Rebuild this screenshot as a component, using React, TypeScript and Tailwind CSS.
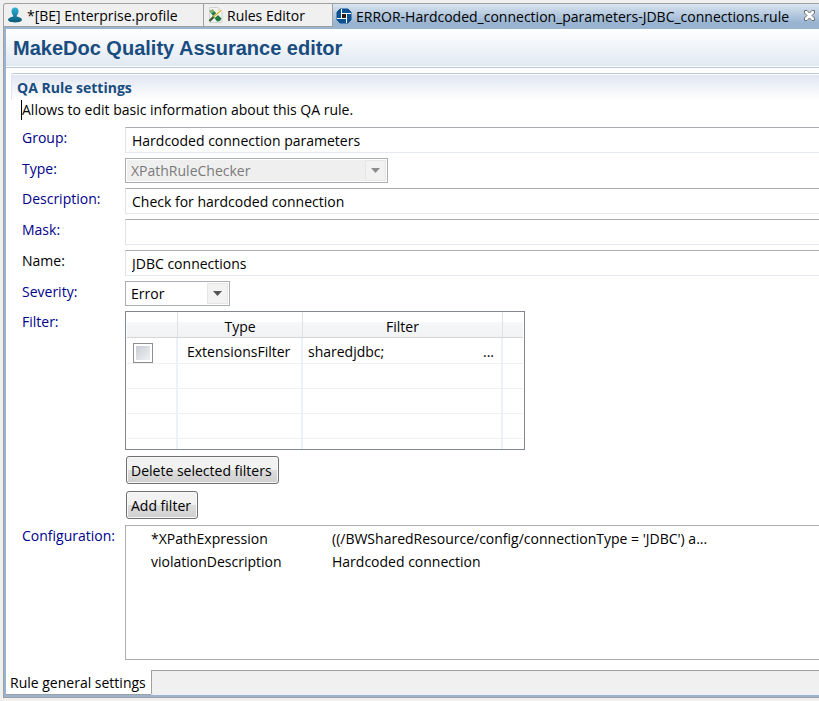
import React from 'react';

function UserIcon() {
  return (
    <svg className="shrink-0" width="16" height="16" viewBox="0 0 16 16" aria-hidden="true">
      <defs>
        <linearGradient id="user-fill" x1="0" y1="0" x2="0" y2="1">
          <stop offset="0" stopColor="#2fb3da" />
          <stop offset="1" stopColor="#0b5875" />
        </linearGradient>
      </defs>
      <path
        d="M8 .6c2.500 0 3.700 1.800 3.500 4-.1 1.700-.9 3-1.700 4v1c2.700.7 4.900 1.300 5.200 3.200.1 1.600-3 2.600-7 2.600s-7.100-1-7-2.600c.3-1.900 2.500-2.500 5.200-3.200v-1c-.8-1-1.600-2.300-1.700-4C4.300 2.400 5.500.6 8 .6z"
        fill="url(#user-fill)"
      />
    </svg>
  );
}

function RulesIcon() {
  return (
    <svg className="shrink-0" width="16" height="16" viewBox="0 0 16 16" aria-hidden="true">
      <path d="M1.500 .5h8.500l4 4v11H1.500z" fill="#f1f1ef" stroke="#d2d2cf" />
      <path d="M10 .5v4h4z" fill="#dcdcda" />
      <path d="M1.500 4l3-1.500 9 9-1.500 2.500-3 .5z" fill="#1e7a42" />
      <path d="M1.500 4l3-1.500 2 2-3 2z" fill="#7fae70" />
      <path d="M6 10L13.500 3" stroke="#fff" strokeWidth="2.500" />
      <path d="M1.500 14L6 9.500" stroke="#37602f" strokeWidth="2.400" />
      <path d="M5.500 10L13.500 3" stroke="#d9b52e" strokeWidth="1.300" />
    </svg>
  );
}

function RuleFileIcon() {
  return (
    <svg className="shrink-0" width="16" height="16" viewBox="0 0 16 16" aria-hidden="true">
      <path d="M4 1h8l3 3v8l-3 3H4l-3-3V4z" fill="#0d5190" stroke="#0d5190" strokeLinejoin="round" />
      <path d="M5.500 1v9.500M15 5.500H5.500M10.500 15V5.500M1 10.500h9.500" fill="none" stroke="#fff" />
      <rect x="6" y="6" width="4" height="4" fill="#2a1a12" />
    </svg>
  );
}

function CloseIcon() {
  return (
    <svg width="11" height="11" viewBox="0 0 11 11" aria-hidden="true">
      <path
        d="M.5 .5h2.500l2.500 2.500L8 .5h2.500V3L8 5.500l2.500 2.500v2.500H8L5.500 8 3 10.500H.5V8L3 5.500.5 3z"
        fill="#fff"
        stroke="#6d6d6d"
      />
    </svg>
  );
}

function Combo(props: { id: string; value: string; disabled?: boolean; width: string }) {
  return (
    <div className={`relative h-[25px] ${props.width}`}>
      <select
        id={props.id}
        disabled={props.disabled}
        defaultValue={props.value}
        className="block h-full w-full appearance-none border border-[#abadb3] bg-white pl-[5px] text-black opacity-100 shadow-[inset_0_0_0_1px_#fff] disabled:bg-[#efefef] disabled:text-[#7a7a7a]"
      >
        <option>{props.value}</option>
      </select>
      <span className="pointer-events-none absolute inset-y-[2px] right-[2px] flex w-[21px] items-center justify-center border border-[#e6e6e6] bg-[#f2f2f2]">
        <svg width="9" height="5" viewBox="0 0 9 5" aria-hidden="true">
          <path d="M0 0h9L4.500 5z" fill={props.disabled ? '#8c8c8c' : '#555'} />
        </svg>
      </span>
    </div>
  );
}

function Label(props: { htmlFor: string; children: string; plain?: boolean }) {
  return (
    <label
      htmlFor={props.htmlFor}
      className={`leading-[22px] ${props.plain ? 'text-black' : 'text-[#00008b]'}`}
    >
      {props.children}
    </label>
  );
}

function TextField(props: { id: string; value?: string }) {
  return (
    <input
      id={props.id}
      type="text"
      defaultValue={props.value}
      className="h-[26px] w-full border border-r-0 border-t-[#abadb3] border-b-[#e3e9ef] border-l-[#e2e3ea] bg-white px-1.5 outline-none"
    />
  );
}

const pushButton =
  'h-7 rounded-[3px] border border-[#707070] bg-linear-to-b from-[#f2f2f2] from-50% via-[#dddddd] via-50% to-[#cfcfcf] pt-0.5 pr-1.5 pl-1 shadow-[inset_0_0_0_1px_#f8f8f8]';
const headCell = 'border-b border-b-[#d5d5d5] p-0 font-normal';
const divider = 'border-r-2 border-r-[#ebf0fb]';
const headDivider = 'border-r border-r-[#dfe2e6]';

export default function App() {
  return (
    <div className="flex min-h-screen flex-col overflow-x-hidden bg-[#f0f0f0] pt-[3px] pb-[3px] pl-[3px] font-['Open_Sans','Noto_Sans',sans-serif] text-[14px] leading-5 text-black">
      <div className="flex flex-1 flex-col rounded-tl-[3px] border border-r-0 border-[#a0a0a0]">
        <div role="tablist" className="flex h-[25px] whitespace-nowrap bg-[#99b4d1]">
          <button role="tab" className="flex h-[23px] w-[200px] shrink-0 items-center gap-1 rounded-tl-[2px] border-r border-b border-[#a0a0a0] bg-[#f0f0f0] pl-[3px]">
            <UserIcon />
            <span className="pt-0.5">*[BE] Enterprise.profile</span>
          </button>
          <button role="tab" className="flex h-[23px] w-[129px] shrink-0 items-center gap-[3px] border-r border-b border-[#a0a0a0] bg-[#f0f0f0] pl-1">
            <RulesIcon />
            <span className="pt-0.5">Rules Editor</span>
          </button>
          <div className="flex flex-1 items-start justify-between bg-linear-to-b from-[#dae5f0] to-[#99b4d1] to-75% pr-1 pl-[3px]">
            <button role="tab" aria-selected="true" className="flex h-[23px] items-center gap-1">
              <RuleFileIcon />
              <span className="pt-0.5">ERROR-Hardcoded_connection_parameters-JDBC_connections.rule</span>
            </button>
            <button aria-label="Close" className="flex h-[22px] items-center">
              <CloseIcon />
            </button>
          </div>
        </div>

        <div className="flex flex-1 flex-col border-b-2 border-l-2 border-[#99b4d1] bg-white">
          <header className="border-b border-[#b8c7d9] pb-px">
            <h1 className="h-[37px] bg-linear-to-b from-white to-[#e1e9f2] pl-[7px] font-['Liberation_Sans',Arial,sans-serif] text-[20px] leading-[38px] font-bold whitespace-nowrap text-[#194c7f]">
              MakeDoc Quality Assurance editor
            </h1>
          </header>

          <main className="flex flex-1 flex-col pt-[5px] pl-[5px]">
            <div className="rounded-tl-[3px] border-t border-[#b8c7d9] pt-px">
              <h2 className="h-[25px] border-l border-[#e1e6f1] bg-linear-to-b from-[#e1e6f1] to-white pl-[5px] leading-[25px] font-bold text-[#194c7f]">
                QA Rule settings
              </h2>
            </div>
            <p className="mb-[7px] ml-2.5 h-5 self-start border-l border-black leading-5">
              Allows to edit basic information about this QA rule.
            </p>

            <form
              className="grid flex-1 grid-cols-[103px_minmax(0,1fr)] grid-rows-[repeat(7,auto)_1fr] gap-y-[5px] pl-[11px]"
              onSubmit={(e) => e.preventDefault()}
            >
              <Label htmlFor="group">Group:</Label>
              <TextField id="group" value="Hardcoded connection parameters" />
              <Label htmlFor="type">Type:</Label>
              <Combo id="type" value="XPathRuleChecker" disabled width="w-[263px]" />
              <Label htmlFor="description">Description:</Label>
              <TextField id="description" value="Check for hardcoded connection" />
              <Label htmlFor="mask">Mask:</Label>
              <TextField id="mask" />
              <Label htmlFor="name" plain>Name:</Label>
              <TextField id="name" value="JDBC connections" />
              <Label htmlFor="severity">Severity:</Label>
              <Combo id="severity" value="Error" width="w-[105px]" />

              <span id="filter-label" className="leading-[22px] text-[#00008b]">Filter:</span>
              <div className="mb-px flex flex-col items-start">
                <div className="h-[139px] w-[400px] overflow-hidden border border-[#828790] px-px">
                  <table aria-labelledby="filter-label" className="w-full table-fixed border-separate border-spacing-0">
                    <colgroup>
                      <col className="w-[51px]" />
                      <col className="w-[125px]" />
                      <col className="w-[200px]" />
                      <col />
                    </colgroup>
                    <thead>
                      <tr className="h-[26px] bg-linear-to-b from-white from-40% via-[#f6f7f9] via-40% to-[#f1f2f4]">
                        <th className={`${headCell} ${headDivider}`} />
                        <th className={`${headCell} ${headDivider} pt-1`}>Type</th>
                        <th className={`${headCell} ${headDivider} pt-1`}>Filter</th>
                        <th className={headCell} />
                      </tr>
                    </thead>
                    <tbody>
                      <tr className="h-[26px]">
                        <td className={`border-b border-b-[#f0f0f0] p-0 pt-1 pl-1.5 ${divider}`}>
                          <input
                            type="checkbox"
                            aria-label="Select ExtensionsFilter"
                            className="block size-5 appearance-none border border-[#8e8f8f] bg-linear-to-br from-[#c4c9d0] to-[#f6f6f6] bg-clip-content p-[2px]"
                          />
                        </td>
                        <td className={`border-b border-b-[#f0f0f0] p-0 pt-[3px] pl-[9px] ${divider}`}>ExtensionsFilter</td>
                        <td className={`border-b border-b-[#f0f0f0] p-0 pt-[3px] ${divider}`}>
                          <div className="flex justify-between pr-[7px] pl-[5px]">
                            <span>sharedjdbc;</span>
                            <button type="button" aria-label="Edit filter">...</button>
                          </div>
                        </td>
                        <td className="border-b border-b-[#f0f0f0] p-0" />
                      </tr>
                      {[1, 2, 3, 4].map((row) => (
                        <tr key={row} className="h-[25px]">
                          <td className={`border-b border-b-[#f0f0f0] p-0 ${divider}`} />
                          <td className={`border-b border-b-[#f0f0f0] p-0 ${divider}`} />
                          <td className={`border-b border-b-[#f0f0f0] p-0 ${divider}`} />
                          <td className="border-b border-b-[#f0f0f0] p-0" />
                        </tr>
                      ))}
                    </tbody>
                  </table>
                </div>
                <div className="mt-1.5 ml-px flex flex-col items-start gap-[7px]">
                  <button type="button" className={pushButton}>Delete selected filters</button>
                  <button type="button" className={pushButton}>Add filter</button>
                </div>
              </div>

              <span id="config-label" className="leading-[22px] text-[#00008b]">Configuration:</span>
              <div className="min-h-[135px] border border-r-0 border-[#abadb3] pt-px pl-[25px]">
                <table aria-labelledby="config-label" className="w-full table-fixed">
                  <tbody>
                    <tr className="h-[23px]">
                      <td className="w-[181px] p-0">*XPathExpression</td>
                      <td className="p-0">((/BWSharedResource/config/connectionType = 'JDBC') a...</td>
                    </tr>
                    <tr className="h-[23px]">
                      <td className="p-0">violationDescription</td>
                      <td className="p-0">Hardcoded connection</td>
                    </tr>
                  </tbody>
                </table>
              </div>
            </form>
          </main>

          <div role="tablist" className="mt-2.5 flex h-[25px]">
            <button role="tab" aria-selected="true" className="w-[145px] shrink-0 border-b border-[#a0a0a0] pt-0.5 pl-1 text-left whitespace-nowrap">
              Rule general settings
            </button>
            <div className="flex-1 rounded-bl-[2px] border-t border-l border-[#a0a0a0] bg-[#f0f0f0]" />
          </div>
        </div>
      </div>
    </div>
  );
}
